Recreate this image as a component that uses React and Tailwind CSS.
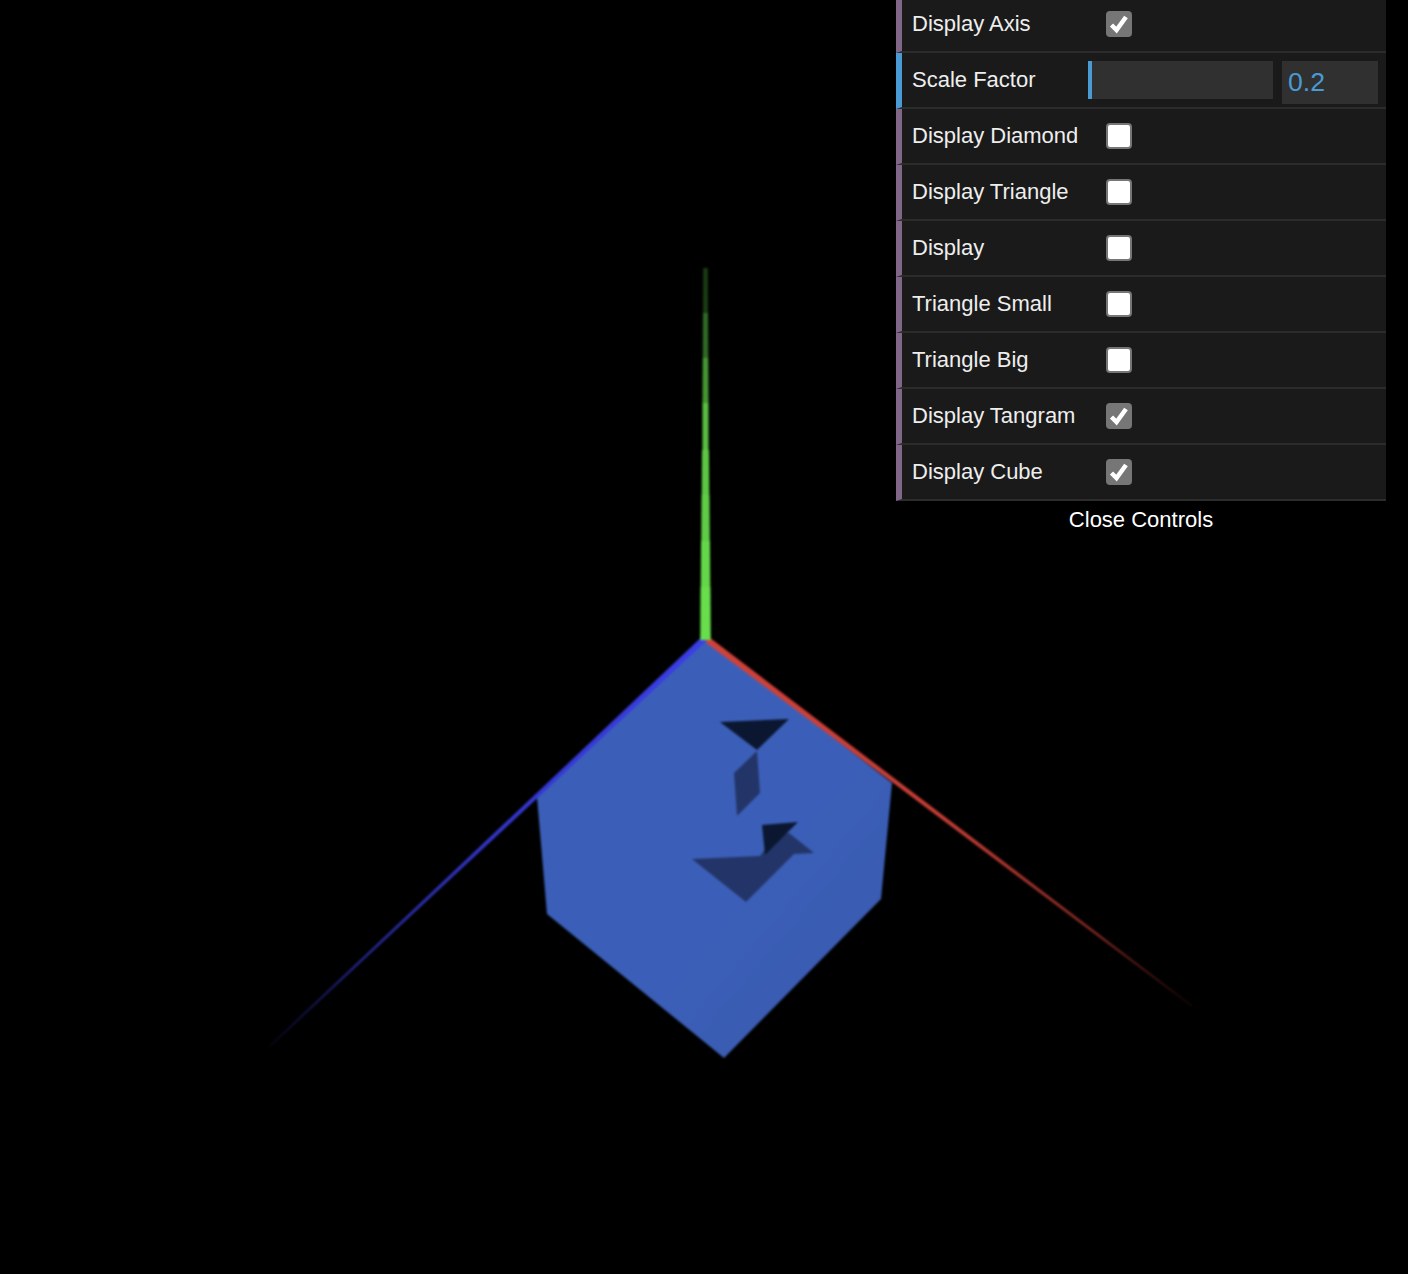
import React from 'react';

// axis segments, bottom to top, the green one fades in steps
const greenSteps = [
  { y1: 640, y2: 587, w1: 10.5, w2: 10, color: '#68de4c' },
  { y1: 587, y2: 541, w1: 9.5, w2: 9, color: '#64d64a' },
  { y1: 541, y2: 495, w1: 8.5, w2: 8, color: '#5fcc46' },
  { y1: 495, y2: 450, w1: 7.5, w2: 7, color: '#5cc644' },
  { y1: 450, y2: 403, w1: 6, w2: 6, color: '#59bf42' },
  { y1: 403, y2: 358, w1: 6, w2: 5.5, color: '#459632' },
  { y1: 358, y2: 313, w1: 5.5, w2: 5, color: '#2f6a25' },
  { y1: 313, y2: 268, w1: 5, w2: 4.5, color: '#1a3b14' },
];

const rows = [
  { label: 'Display Axis', checked: true },
  { label: 'Scale Factor', slider: true },
  { label: 'Display Diamond' },
  { label: 'Display Triangle' },
  { label: 'Display' },
  { label: 'Triangle Small' },
  { label: 'Triangle Big' },
  { label: 'Display Tangram', checked: true },
  { label: 'Display Cube', checked: true },
];

const Scene = () => (
  <svg className="absolute inset-0 blur-[1px]" width="1408" height="1274" viewBox="0 0 1408 1274">
    <defs>
      <linearGradient id="cubeFill" x1="0" y1="0" x2="1" y2="1">
        <stop offset="0" stopColor="#3b5fb8" />
        <stop offset="0.6" stopColor="#3b5fb8" />
        <stop offset="1" stopColor="#3a58ab" />
      </linearGradient>
      <linearGradient id="redAxis" gradientUnits="userSpaceOnUse" x1="705" y1="638" x2="1192" y2="1006">
        <stop offset="0" stopColor="#d0423a" />
        <stop offset="0.5" stopColor="#c43d35" />
        <stop offset="0.8" stopColor="#8a2a24" />
        <stop offset="1" stopColor="#1a0705" />
      </linearGradient>
      <linearGradient id="blueAxis" gradientUnits="userSpaceOnUse" x1="705" y1="638" x2="270" y2="1046">
        <stop offset="0" stopColor="#3a3fe6" />
        <stop offset="0.5" stopColor="#3336cc" />
        <stop offset="0.8" stopColor="#24268f" />
        <stop offset="1" stopColor="#07071f" />
      </linearGradient>
    </defs>

    {/* cube */}
    <polygon points="705,638 892,783 881,899 724,1058 547,914 537,797" fill="url(#cubeFill)" />

    {/* tangram seen through the cube */}
    <polygon points="692,859 760,856 775,836 789,833 814,853 794,854 746,902" fill="#233568" />
    <polygon points="757,751 760,793 737,816 734,773" fill="#233568" />
    <polygon points="720,722 789,719 757,750" fill="#0b1730" />
    <polygon points="762,825 798,822 765,855" fill="#0b1730" />

    {/* axes */}
    <polygon points="707,635.6 1192.4,1005.4 1191.6,1006.6 703.2,640.4" fill="url(#redAxis)" />
    <polygon points="703,635.8 269.5,1045.5 270.5,1046.5 707,640.2" fill="url(#blueAxis)" />
    {greenSteps.map((s) => (
      <polygon
        key={s.y2}
        points={`${705.5 - s.w1 / 2},${s.y1} ${705.5 + s.w1 / 2},${s.y1} ${705.5 + s.w2 / 2},${s.y2} ${705.5 - s.w2 / 2},${s.y2}`}
        fill={s.color}
      />
    ))}
  </svg>
);

const Checkbox = ({ checked }) => (
  <span className="relative block h-[26px] w-[26px]">
    <input
      type="checkbox"
      defaultChecked={checked}
      className="peer m-0 block h-full w-full appearance-none rounded-[4px] border-2 border-[#767676] bg-white checked:bg-[#767676]"
    />
    <svg className="pointer-events-none absolute inset-0 hidden peer-checked:block" viewBox="0 0 26 26" fill="none">
      <path d="M5.5 14 L10.5 19 L20 6" stroke="white" strokeWidth="4.5" />
    </svg>
  </span>
);

const Row = ({ label, checked, slider }) => (
  <div className={`flex h-[56px] items-center border-b-2 border-l-[6px] border-b-[#2c2c2c] pl-[10px] ${slider ? 'border-l-[#4a9ad4]' : 'border-l-[#806787]'}`}>
    <div className={`pb-[2px] ${slider ? 'w-[176px]' : 'w-[194px]'}`}>{label}</div>
    {slider ? (
      <div className="flex items-start gap-[9px] self-start pt-[8px]">
        <div className="h-[38px] w-[185px] bg-[#303030]">
          <div className="h-full w-[4px] bg-[#4a9ad4]" />
        </div>
        <div className="flex h-[43px] w-[96px] items-center bg-[#303030] pb-[2px] pl-[6px] text-[26.67px] text-[#4a9ad4]">0.2</div>
      </div>
    ) : (
      <Checkbox checked={checked} />
    )}
  </div>
);

export default function App() {
  return (
    <div className="relative h-[1274px] w-[1408px] overflow-hidden bg-black font-['Liberation_Sans',Arial,sans-serif] text-[22px] text-[#eeeeee]">
      <Scene />

      {/* controls panel */}
      <div className="absolute right-[22px] top-[-3px] w-[490px]">
        <div className="bg-[#1a1a1a]">
          {rows.map((r) => (
            <Row key={r.label} {...r} />
          ))}
        </div>
        <div className="flex h-[36px] items-center justify-center text-white">Close Controls</div>
      </div>
    </div>
  );
}
